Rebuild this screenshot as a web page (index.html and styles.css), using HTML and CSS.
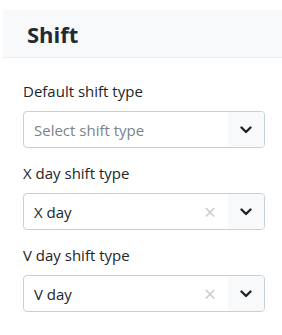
FILE: index.html
```html
<!DOCTYPE html>
<html lang="en">
<head>
    <meta charset="UTF-8">
    <title>Shift</title>
    <link rel="stylesheet" href="styles.css">
</head>
<body>
    <div class="panel">
        <div class="panel-header">
            <h2>Shift</h2>
        </div>

        <div class="panel-body">
            <div class="field">
                <label>Default shift type</label>
                <div class="select">
                    <span class="value placeholder">Select shift type</span>
                    <span class="toggle">
                        <svg width="12" height="8" viewBox="0 0 12 8"><path d="M1.5 1.5 L6 6 L10.5 1.5" fill="none" stroke="#212529" stroke-width="2.4" stroke-linecap="round" stroke-linejoin="round"/></svg>
                    </span>
                </div>
            </div>

            <div class="field">
                <label>X day shift type</label>
                <div class="select">
                    <span class="value">X day</span>
                    <span class="clear">&times;</span>
                    <span class="toggle">
                        <svg width="12" height="8" viewBox="0 0 12 8"><path d="M1.5 1.5 L6 6 L10.5 1.5" fill="none" stroke="#212529" stroke-width="2.4" stroke-linecap="round" stroke-linejoin="round"/></svg>
                    </span>
                </div>
            </div>

            <div class="field">
                <label>V day shift type</label>
                <div class="select">
                    <span class="value">V day</span>
                    <span class="clear">&times;</span>
                    <span class="toggle">
                        <svg width="12" height="8" viewBox="0 0 12 8"><path d="M1.5 1.5 L6 6 L10.5 1.5" fill="none" stroke="#212529" stroke-width="2.4" stroke-linecap="round" stroke-linejoin="round"/></svg>
                    </span>
                </div>
            </div>
        </div>
    </div>
</body>
</html>
```

FILE: styles.css
```css
body {
    margin: 0;
    font-family: 'Open Sans', 'Noto Sans', sans-serif;
    color: #212529;
    background: #ffffff;
}

.panel {
    padding: 10px 0 0 3px;
}

.panel-header {
    height: 47px;
    background: #f8f9fb;
    border-bottom: 1px solid #eceef1;
    display: flex;
    align-items: center;
    padding-left: 24px;
}

.panel-header h2 {
    margin: 0;
    font-size: 22px;
    font-weight: 700;
    color: #1f2a35;
}

.panel-body {
    padding: 23px 17px 0 20px;
}

.field {
    margin-bottom: 15px;
}

label {
    display: block;
    font-size: 15px;
    line-height: 20px;
    margin-bottom: 10px;
}

.select {
    display: flex;
    align-items: center;
    height: 35px;
    border: 1px solid #c5d0d8;
    border-radius: 4px;
    overflow: hidden;
}

.value {
    flex: 1;
    padding-left: 10px;
    font-size: 15px;
}

.placeholder {
    color: #7b8288;
}

.clear {
    color: #cccccc;
    font-size: 21px;
    padding-right: 12px;
}

.toggle {
    width: 36px;
    height: 100%;
    background: #f8f9fb;
    display: flex;
    align-items: center;
    justify-content: center;
}
```
